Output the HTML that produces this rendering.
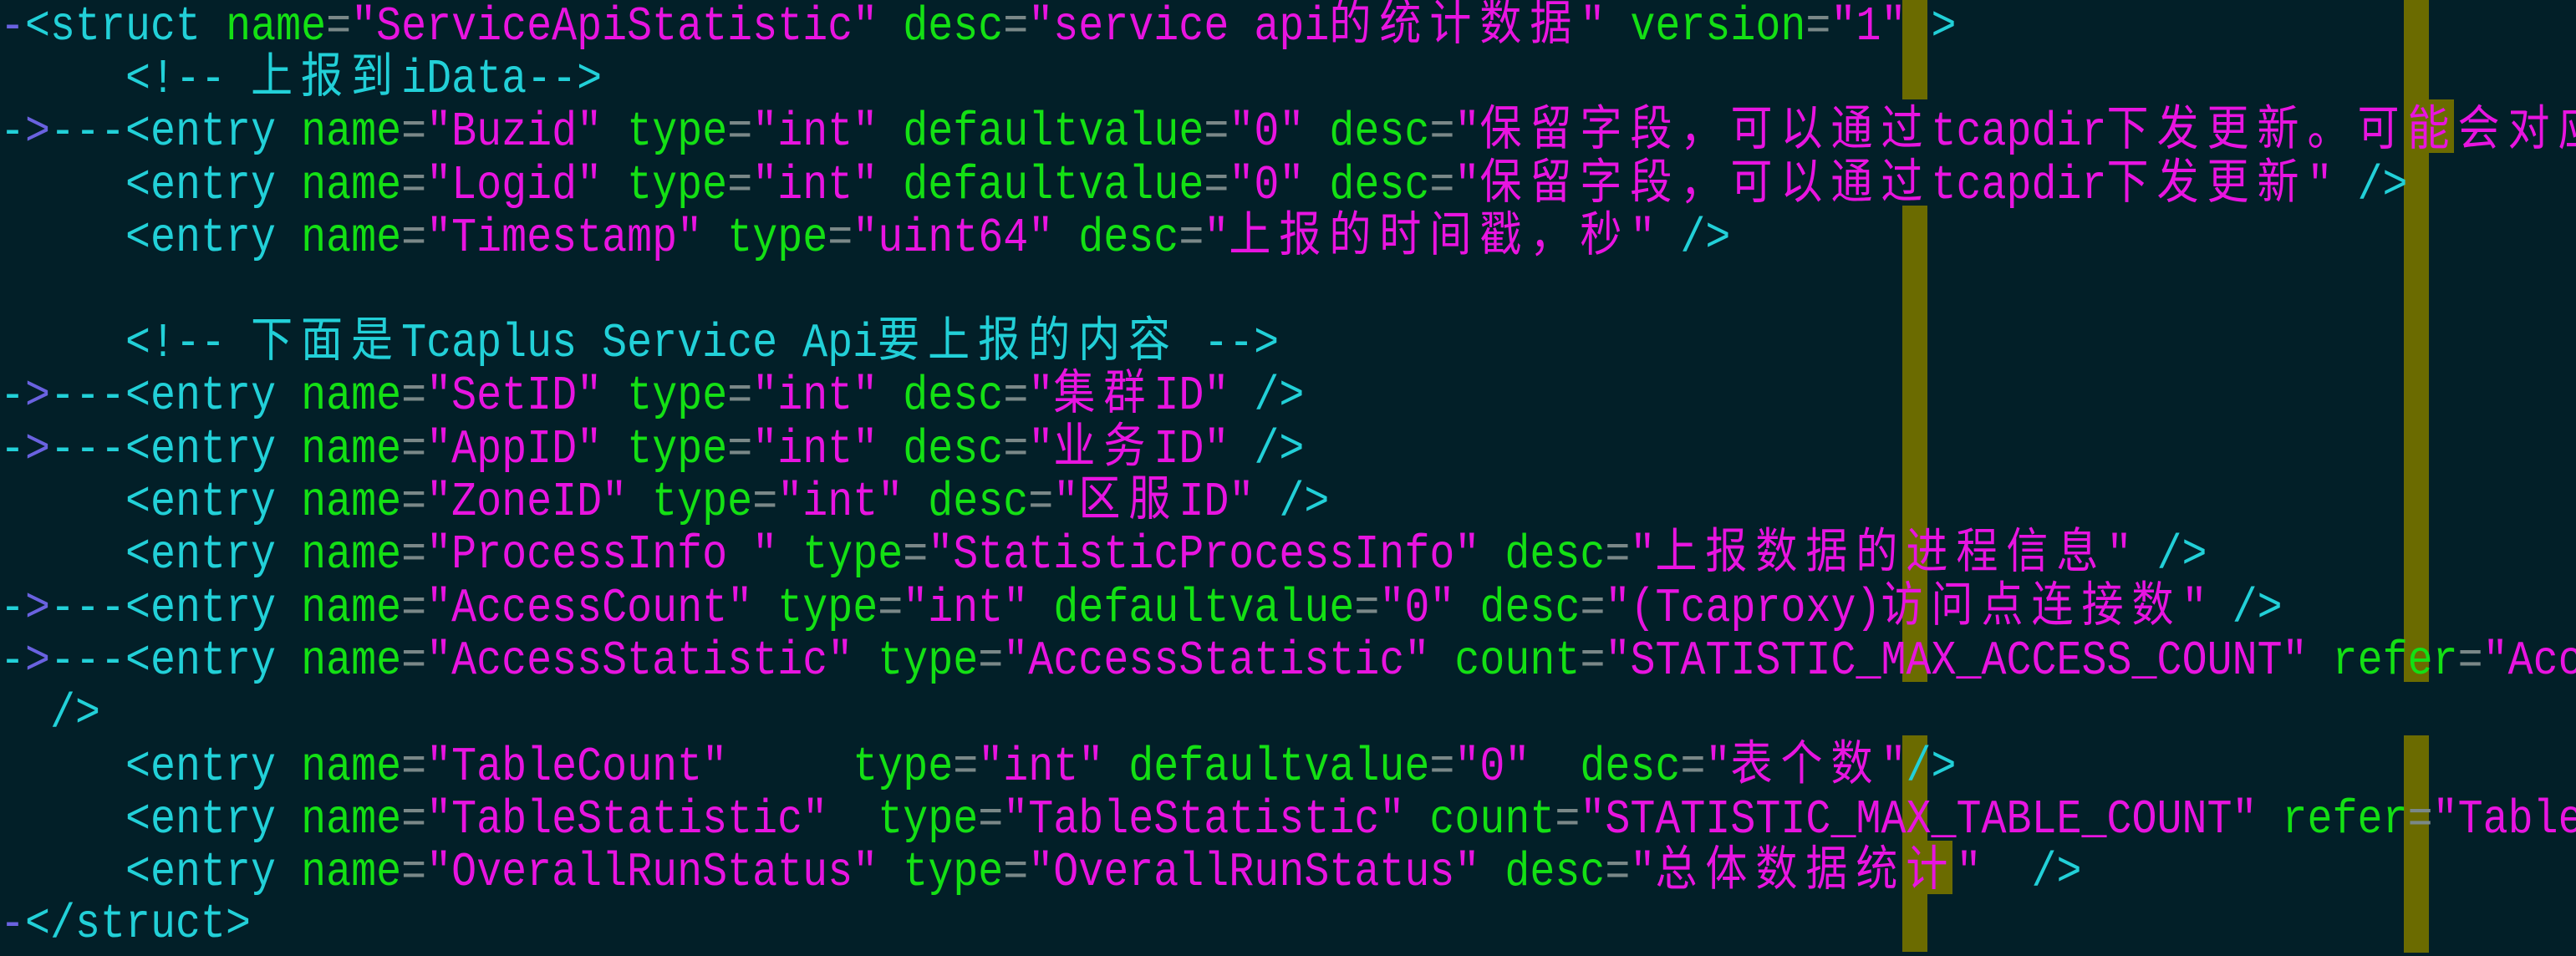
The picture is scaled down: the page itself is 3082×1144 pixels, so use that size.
<!DOCTYPE html>
<html><head><meta charset="utf-8">
<style>
html,body{margin:0;padding:0;}
body{width:3082px;height:1128px;background:#021f28;overflow:hidden;position:relative;
font-family:"Liberation Mono","Noto Sans CJK SC",monospace;font-size:50px;}
.l{position:absolute;left:0;height:64px;line-height:64px;white-space:pre;z-index:2;color:#22d0d8;transform:scaleY(1.15);transform-origin:0 50%;}
.b{position:absolute;background:#6b6b00;z-index:1;}
.t{color:#22d0d8}.a{color:#14e014}.v{color:#e814e0}.e{color:#7a8888}.p{color:#6a62e0}
.c{font-family:"Noto Sans CJK SC",sans-serif;letter-spacing:10px;line-height:0;}
</style></head><body>
<div class="b" style="left:2276px;width:30px;top:-8px;height:127px"></div>
<div class="b" style="left:2276px;width:30px;top:246px;height:570px"></div>
<div class="b" style="left:2276px;width:30px;top:880px;height:127px"></div>
<div class="b" style="left:2276px;width:60px;top:1006px;height:64px"></div>
<div class="b" style="left:2276px;width:30px;top:1069px;height:70px"></div>
<div class="b" style="left:2876px;width:30px;top:-8px;height:127px"></div>
<div class="b" style="left:2876px;width:60px;top:119px;height:64px"></div>
<div class="b" style="left:2876px;width:30px;top:182px;height:634px"></div>
<div class="b" style="left:2876px;width:30px;top:880px;height:260px"></div>

<div class="l" style="top:1px"><span class="p">-</span><span class="t">&lt;struct </span><span class="a">name</span><span class="e">=</span><span class="v">"ServiceApiStatistic"</span> <span class="a">desc</span><span class="e">=</span><span class="v">"service api<span class="c">的统计数据</span>"</span> <span class="a">version</span><span class="e">=</span><span class="v">"1"</span> <span class="t">&gt;</span></div>
<div class="l" style="top:64px"><span class="t">     &lt;!-- <span class="c">上报到</span>iData--&gt;</span></div>
<div class="l" style="top:127px"><span class="t">-</span><span class="p">&gt;</span><span class="t">---&lt;entry </span><span class="a">name</span><span class="e">=</span><span class="v">"Buzid"</span> <span class="a">type</span><span class="e">=</span><span class="v">"int"</span> <span class="a">defaultvalue</span><span class="e">=</span><span class="v">"0"</span> <span class="a">desc</span><span class="e">=</span><span class="v">"<span class="c">保留字段，可以通过</span>tcapdir<span class="c">下发更新。可能会对应</span></span></div>
<div class="l" style="top:191px"><span class="t">     &lt;entry </span><span class="a">name</span><span class="e">=</span><span class="v">"Logid"</span> <span class="a">type</span><span class="e">=</span><span class="v">"int"</span> <span class="a">defaultvalue</span><span class="e">=</span><span class="v">"0"</span> <span class="a">desc</span><span class="e">=</span><span class="v">"<span class="c">保留字段，可以通过</span>tcapdir<span class="c">下发更新</span>"</span> <span class="t">/&gt;</span></div>
<div class="l" style="top:254px"><span class="t">     &lt;entry </span><span class="a">name</span><span class="e">=</span><span class="v">"Timestamp"</span> <span class="a">type</span><span class="e">=</span><span class="v">"uint64"</span> <span class="a">desc</span><span class="e">=</span><span class="v">"<span class="c">上报的时间戳，秒</span>"</span> <span class="t">/&gt;</span></div>
<div class="l" style="top:380px"><span class="t">     &lt;!-- <span class="c">下面是</span>Tcaplus Service Api<span class="c">要上报的内容</span> --&gt;</span></div>
<div class="l" style="top:443px"><span class="t">-</span><span class="p">&gt;</span><span class="t">---&lt;entry </span><span class="a">name</span><span class="e">=</span><span class="v">"SetID"</span> <span class="a">type</span><span class="e">=</span><span class="v">"int"</span> <span class="a">desc</span><span class="e">=</span><span class="v">"<span class="c">集群</span>ID"</span> <span class="t">/&gt;</span></div>
<div class="l" style="top:507px"><span class="t">-</span><span class="p">&gt;</span><span class="t">---&lt;entry </span><span class="a">name</span><span class="e">=</span><span class="v">"AppID"</span> <span class="a">type</span><span class="e">=</span><span class="v">"int"</span> <span class="a">desc</span><span class="e">=</span><span class="v">"<span class="c">业务</span>ID"</span> <span class="t">/&gt;</span></div>
<div class="l" style="top:570px"><span class="t">     &lt;entry </span><span class="a">name</span><span class="e">=</span><span class="v">"ZoneID"</span> <span class="a">type</span><span class="e">=</span><span class="v">"int"</span> <span class="a">desc</span><span class="e">=</span><span class="v">"<span class="c">区服</span>ID"</span> <span class="t">/&gt;</span></div>
<div class="l" style="top:633px"><span class="t">     &lt;entry </span><span class="a">name</span><span class="e">=</span><span class="v">"ProcessInfo "</span> <span class="a">type</span><span class="e">=</span><span class="v">"StatisticProcessInfo"</span> <span class="a">desc</span><span class="e">=</span><span class="v">"<span class="c">上报数据的进程信息</span>"</span> <span class="t">/&gt;</span></div>
<div class="l" style="top:697px"><span class="t">-</span><span class="p">&gt;</span><span class="t">---&lt;entry </span><span class="a">name</span><span class="e">=</span><span class="v">"AccessCount"</span> <span class="a">type</span><span class="e">=</span><span class="v">"int"</span> <span class="a">defaultvalue</span><span class="e">=</span><span class="v">"0"</span> <span class="a">desc</span><span class="e">=</span><span class="v">"(Tcaproxy)<span class="c">访问点连接数</span>"</span> <span class="t">/&gt;</span></div>
<div class="l" style="top:760px"><span class="t">-</span><span class="p">&gt;</span><span class="t">---&lt;entry </span><span class="a">name</span><span class="e">=</span><span class="v">"AccessStatistic"</span> <span class="a">type</span><span class="e">=</span><span class="v">"AccessStatistic"</span> <span class="a">count</span><span class="e">=</span><span class="v">"STATISTIC_MAX_ACCESS_COUNT"</span> <span class="a">refer</span><span class="e">=</span><span class="v">"Acc</span></div>
<div class="l" style="top:823px"><span class="t">  /&gt;</span></div>
<div class="l" style="top:887px"><span class="t">     &lt;entry </span><span class="a">name</span><span class="e">=</span><span class="v">"TableCount"</span>     <span class="a">type</span><span class="e">=</span><span class="v">"int"</span> <span class="a">defaultvalue</span><span class="e">=</span><span class="v">"0"</span>  <span class="a">desc</span><span class="e">=</span><span class="v">"<span class="c">表个数</span>"</span><span class="t">/&gt;</span></div>
<div class="l" style="top:950px"><span class="t">     &lt;entry </span><span class="a">name</span><span class="e">=</span><span class="v">"TableStatistic"</span>  <span class="a">type</span><span class="e">=</span><span class="v">"TableStatistic"</span> <span class="a">count</span><span class="e">=</span><span class="v">"STATISTIC_MAX_TABLE_COUNT"</span> <span class="a">refer</span><span class="e">=</span><span class="v">"Table</span></div>
<div class="l" style="top:1013px"><span class="t">     &lt;entry </span><span class="a">name</span><span class="e">=</span><span class="v">"OverallRunStatus"</span> <span class="a">type</span><span class="e">=</span><span class="v">"OverallRunStatus"</span> <span class="a">desc</span><span class="e">=</span><span class="v">"<span class="c">总体数据统计</span>"</span>  <span class="t">/&gt;</span></div>
<div class="l" style="top:1075px"><span class="p">-</span><span class="t">&lt;/struct&gt;</span></div>
</body></html>
